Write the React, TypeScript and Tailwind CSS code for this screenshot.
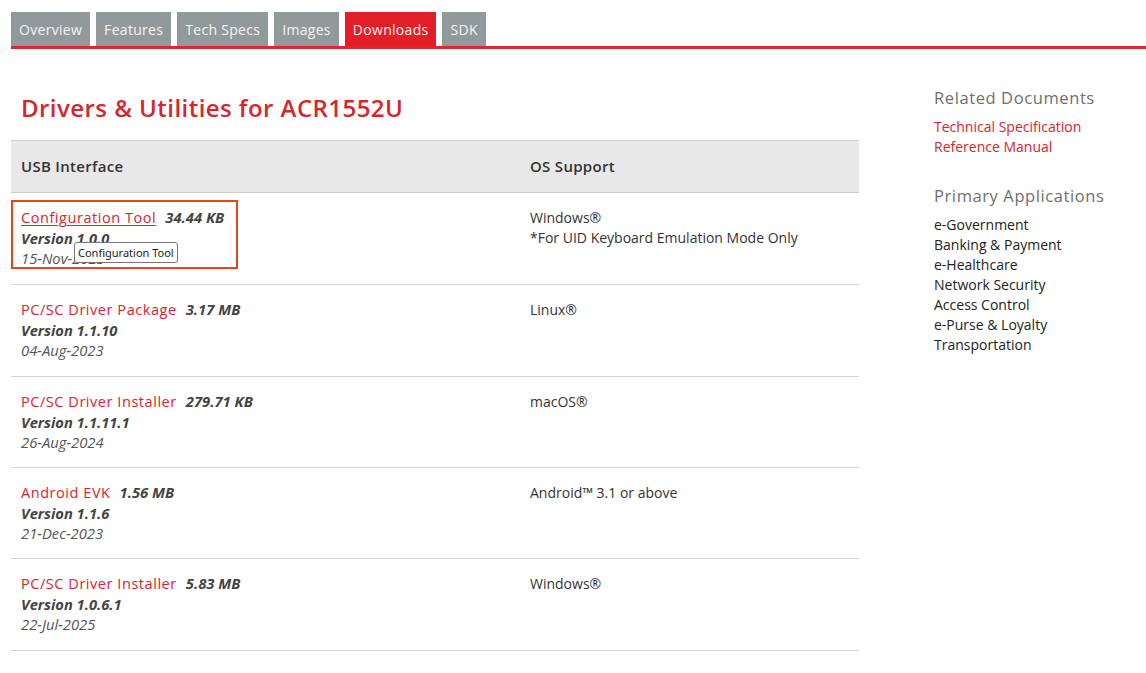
import React from 'react';

const tabs = ['Overview', 'Features', 'Tech Specs', 'Images', 'Downloads', 'SDK'];

const rows = [
  { name: 'Configuration Tool', size: '34.44 KB', version: 'Version 1.0.0', date: '15-Nov-2023', os: ['Windows®', '*For UID Keyboard Emulation Mode Only'], h: 'h-[92px]' },
  { name: 'PC/SC Driver Package', size: '3.17 MB', version: 'Version 1.1.10', date: '04-Aug-2023', os: ['Linux®'], h: 'h-[92px]' },
  { name: 'PC/SC Driver Installer', size: '279.71 KB', version: 'Version 1.1.11.1', date: '26-Aug-2024', os: ['macOS®'], h: 'h-[91px]' },
  { name: 'Android EVK', size: '1.56 MB', version: 'Version 1.1.6', date: '21-Dec-2023', os: ['Android™ 3.1 or above'], h: 'h-[91px]' },
  { name: 'PC/SC Driver Installer', size: '5.83 MB', version: 'Version 1.0.6.1', date: '22-Jul-2025', os: ['Windows®'], h: 'h-[92px]' },
];

const apps = ['e-Government', 'Banking & Payment', 'e-Healthcare', 'Network Security', 'Access Control', 'e-Purse & Loyalty', 'Transportation'];

const App = () => {
  return (
    <div className="min-h-screen bg-white pl-[11px] pt-[12px] font-['Open_Sans',sans-serif] text-[14px] text-[#333]">
      <div className="flex gap-[6px]">
        {tabs.map((t) => (
          <div
            key={t}
            className={`h-[34px] px-[8px] flex items-center text-[14px] tracking-[0.3px] text-[#f4f4f4] ${t === 'Downloads' ? 'bg-[#e31e26]' : 'bg-[#919a9b]'}`}
          >
            {t}
          </div>
        ))}
      </div>
      <div className="h-[3px] bg-[#e0262b]" />

      <div className="flex gap-[75px]">
        <div className="w-[848px]">
          <h1 className="pl-[10px] pt-[43px] pb-[16px] text-[24px] leading-[32px] font-semibold text-[#d6262d] tracking-[0.45px]">
            Drivers &amp; Utilities for ACR1552U
          </h1>
          <div className="flex h-[53px] items-center bg-[#e8e8e8] border-y border-[#cccccc] text-[15px] font-semibold tracking-[0.3px] text-[#333]">
            <div className="w-[519px] pl-[10px]">USB Interface</div>
            <div>OS Support</div>
          </div>
          {rows.map((r, i) => (
            <div key={i} className={`relative flex ${r.h} pt-[14px] border-b border-[#d4d4d4] leading-[20px]`}>
              <div className="w-[519px] pl-[10px]">
                <div>
                  <span className={`text-[14.5px] text-[#d6262d] font-medium tracking-[0.55px] ${i === 0 ? 'underline underline-offset-2' : ''}`}>{r.name}</span>
                  <span className="ml-[9px] text-[14.8px] font-bold italic text-[#444]">{r.size}</span>
                </div>
                <div className="text-[14.7px] font-bold italic text-[#444]">{r.version}</div>
                <div className="text-[14.8px] italic text-[#555]">{r.date}</div>
              </div>
              <div className="pt-[1px] text-[#333]">
                {r.os.map((o) => (
                  <div key={o}>{o}</div>
                ))}
              </div>
              {i === 0 && (
                <>
                  <div className="absolute left-0 top-[7px] w-[227px] h-[69px] border-2 border-[#e5461f]" />
                  <div className="absolute left-[63px] top-[49px] h-[21px] px-[3px] flex items-center bg-white border border-[#767676] rounded-[3px] text-[11px] text-[#222] font-['Noto_Sans',sans-serif]">
                    Configuration Tool
                  </div>
                </>
              )}
            </div>
          ))}
        </div>

        <div className="pt-[37px]">
          <div className="text-[16.5px] leading-[24px] text-[#6f6f6f] tracking-[0.6px]">Related Documents</div>
          <div className="mt-[7px] leading-[20px] text-[#d6262d]">
            <div>Technical Specification</div>
            <div>Reference Manual</div>
          </div>
          <div className="mt-[27px] text-[16.5px] leading-[24px] text-[#6f6f6f] tracking-[0.6px]">Primary Applications</div>
          <div className="mt-[7px] leading-[20px] text-[#222]">
            {apps.map((a) => (
              <div key={a}>{a}</div>
            ))}
          </div>
        </div>
      </div>
    </div>
  );
};

export default App;
